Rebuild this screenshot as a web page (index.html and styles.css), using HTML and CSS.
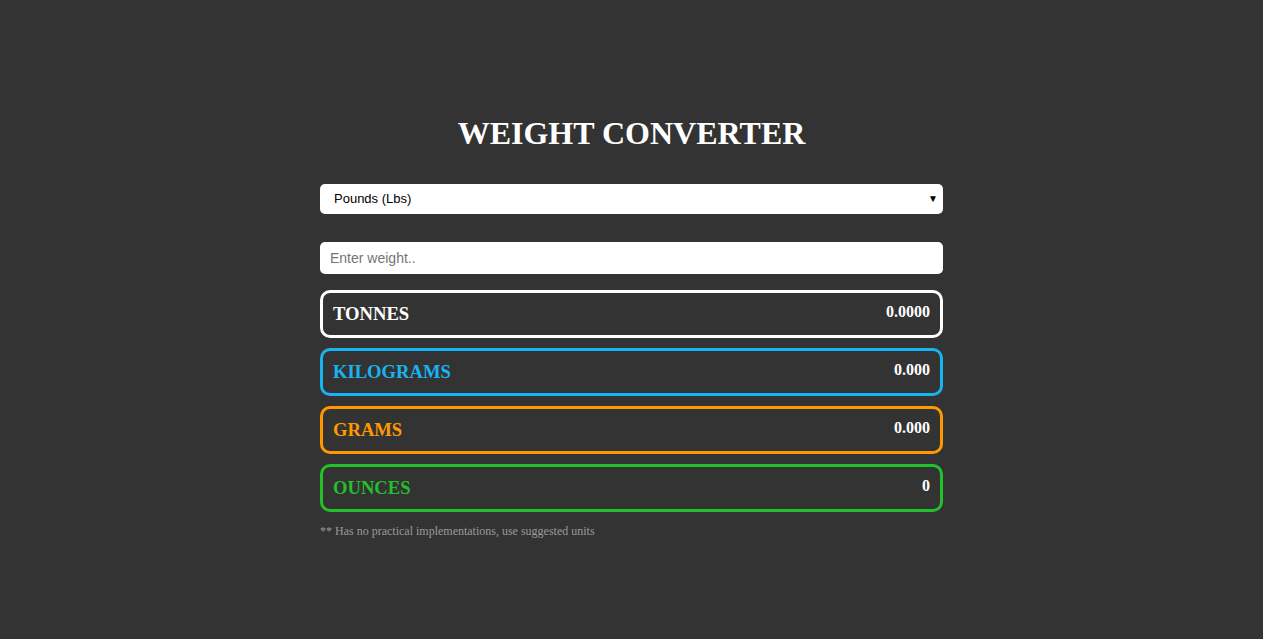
FILE: index.html
```html
<!DOCTYPE html>
<html>
<head>
<meta charset="utf-8">
<link rel="stylesheet" href="styles.css">
</head>
<body>
<main class="wrap">
  <h1 class="title">WEIGHT CONVERTER</h1>
  <div class="select">
    <span>Pounds (Lbs)</span>
    <span class="arrow">&#9660;</span>
  </div>
  <div class="input">Enter weight..</div>
  <div class="box white"><span class="label">TONNES</span><span class="val">0.0000</span></div>
  <div class="box blue"><span class="label">KILOGRAMS</span><span class="val">0.000</span></div>
  <div class="box orange"><span class="label">GRAMS</span><span class="val">0.000</span></div>
  <div class="box green"><span class="label">OUNCES</span><span class="val">0</span></div>
  <p class="note">** Has no practical implementations, use suggested units</p>
</main>
</body>
</html>
```
FILE: styles.css
```css
html, body {
  margin: 0;
  padding: 0;
  background: #333333;
  font-family: "Liberation Serif", "Times New Roman", serif;
}
.wrap {
  width: 623px;
  margin: 0 auto;
  padding-top: 114px;
  display: flex;
  flex-direction: column;
}
.title {
  margin: 0 0 32px;
  text-align: center;
  color: #fff;
  font-size: 32px;
  font-weight: bold;
  line-height: 38px;
}
.select {
  height: 30px;
  background: #fff;
  border-radius: 5px;
  display: flex;
  align-items: center;
  justify-content: space-between;
  padding: 0 5px 2px 14px;
  font-family: "Liberation Sans", Arial, sans-serif;
  font-size: 13px;
  color: #000;
  box-sizing: border-box;
}
.arrow {
  font-size: 10px;
}
.input {
  margin-top: 28px;
  height: 32px;
  background: #fff;
  border-radius: 5px;
  display: flex;
  align-items: center;
  padding-left: 10px;
  font-family: "Liberation Sans", Arial, sans-serif;
  font-size: 14px;
  color: #757575;
  box-sizing: border-box;
}
.box {
  margin-top: 16px;
  height: 48px;
  border: 3px solid #fff;
  border-radius: 10px;
  box-sizing: border-box;
  display: flex;
  justify-content: space-between;
  padding: 0 10px 0 10px;
  font-weight: bold;
}
.box + .box { margin-top: 10px; }
.label {
  font-size: 18.6px;
  line-height: 18px;
  padding-top: 12px;
}
.val {
  color: #fff;
  font-size: 16px;
  line-height: 16px;
  padding-top: 11px;
}
.white { border-color: #fff; color: #fff; }
.blue { border-color: #18b4f2; color: #18b4f2; }
.orange { border-color: #ff9900; color: #ff9900; }
.green { border-color: #22c02a; color: #22c02a; }
.note {
  margin: 12px 0 0;
  font-size: 12px;
  color: #9a9a9a;
}
```
